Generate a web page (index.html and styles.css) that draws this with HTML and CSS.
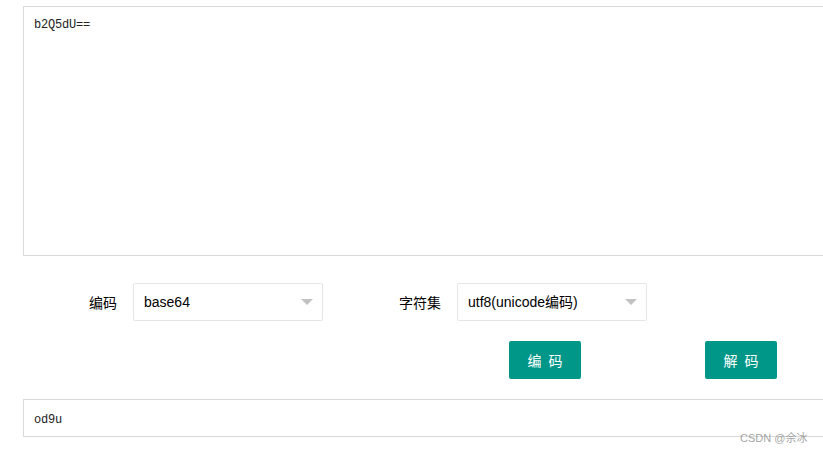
FILE: index.html
```html
<!DOCTYPE html>
<html lang="zh-CN">
<head>
  <meta charset="UTF-8" />
  <title>Base64 编码解码</title>
  <link rel="stylesheet" href="styles.css">
</head>
<body>
  <div class="container">
    <textarea class="source" id="source">b2Q5dU==</textarea>

    <div class="form-row">
      <div class="form-item">
        <label class="form-label">编码</label>
        <div class="select">
          <span class="select-value">base64</span>
          <i class="edge"></i>
        </div>
      </div>
      <div class="form-item charset">
        <label class="form-label">字符集</label>
        <div class="select">
          <span class="select-value">utf8(unicode编码)</span>
          <i class="edge"></i>
        </div>
      </div>
    </div>

    <div class="btn-row">
      <button class="btn">编 码</button>
      <button class="btn btn-decode">解 码</button>
    </div>

    <input class="result" type="text" value="od9u" />
  </div>
  <div class="watermark">CSDN @佘冰</div>
</body>
</html>
```

FILE: styles.css
```css
body {
  margin: 0;
  background: #fff;
  font-family: "Noto Sans CJK SC", "Liberation Sans", sans-serif;
  font-size: 14px;
  color: #000;
  overflow: hidden;
}
.container {
  padding: 6px 0 0 23px;
  width: 900px;
}
.source,
.result {
  display: block;
  box-sizing: border-box;
  width: 880px;
  border: 1px solid #d9d9d9;
  padding: 8px 10px 6px;
  margin: 0;
  font-family: "Liberation Mono", monospace;
  font-size: 12px;
  letter-spacing: -0.2px;
  line-height: 20px;
  color: #222;
  outline: none;
  resize: none;
  background: #fff;
}
.source {
  height: 250px;
}
.result {
  height: 38px;
  margin-top: 20px;
  padding: 3px 10px 0;
}
.form-row {
  display: flex;
  margin-top: 27px;
}
.form-item {
  display: flex;
  align-items: center;
}
.charset {
  margin-left: 24px;
}
.form-label {
  width: 110px;
  box-sizing: border-box;
  padding-right: 16px;
  text-align: right;
  line-height: 20px;
}
.select {
  position: relative;
  box-sizing: border-box;
  width: 190px;
  height: 38px;
  border: 1px solid #e6e6e6;
  border-radius: 2px;
  padding: 0 10px;
  line-height: 36px;
  font-family: "Liberation Sans", "Noto Sans CJK SC", sans-serif;
}
.edge {
  position: absolute;
  right: 9px;
  top: 50%;
  margin-top: -3px;
  width: 0;
  height: 0;
  border-left: 6px solid transparent;
  border-right: 6px solid transparent;
  border-top: 6px solid #c2c2c2;
}
.btn-row {
  display: flex;
  margin-top: 20px;
  padding-left: 486px;
}
.btn {
  width: 72px;
  height: 38px;
  border: none;
  border-radius: 2px;
  background: #009688;
  color: #fff;
  font-family: "Noto Sans CJK SC", sans-serif;
  font-size: 14px;
  letter-spacing: 2px;
  text-indent: 2px;
  padding: 0;
  white-space: pre;
}
.btn-decode {
  margin-left: 124px;
}
.watermark {
  position: absolute;
  left: 740px;
  top: 429px;
  font-family: "Liberation Sans", "Noto Sans CJK SC", sans-serif;
  font-size: 11px;
  color: rgba(120, 120, 120, 0.7);
}
```
